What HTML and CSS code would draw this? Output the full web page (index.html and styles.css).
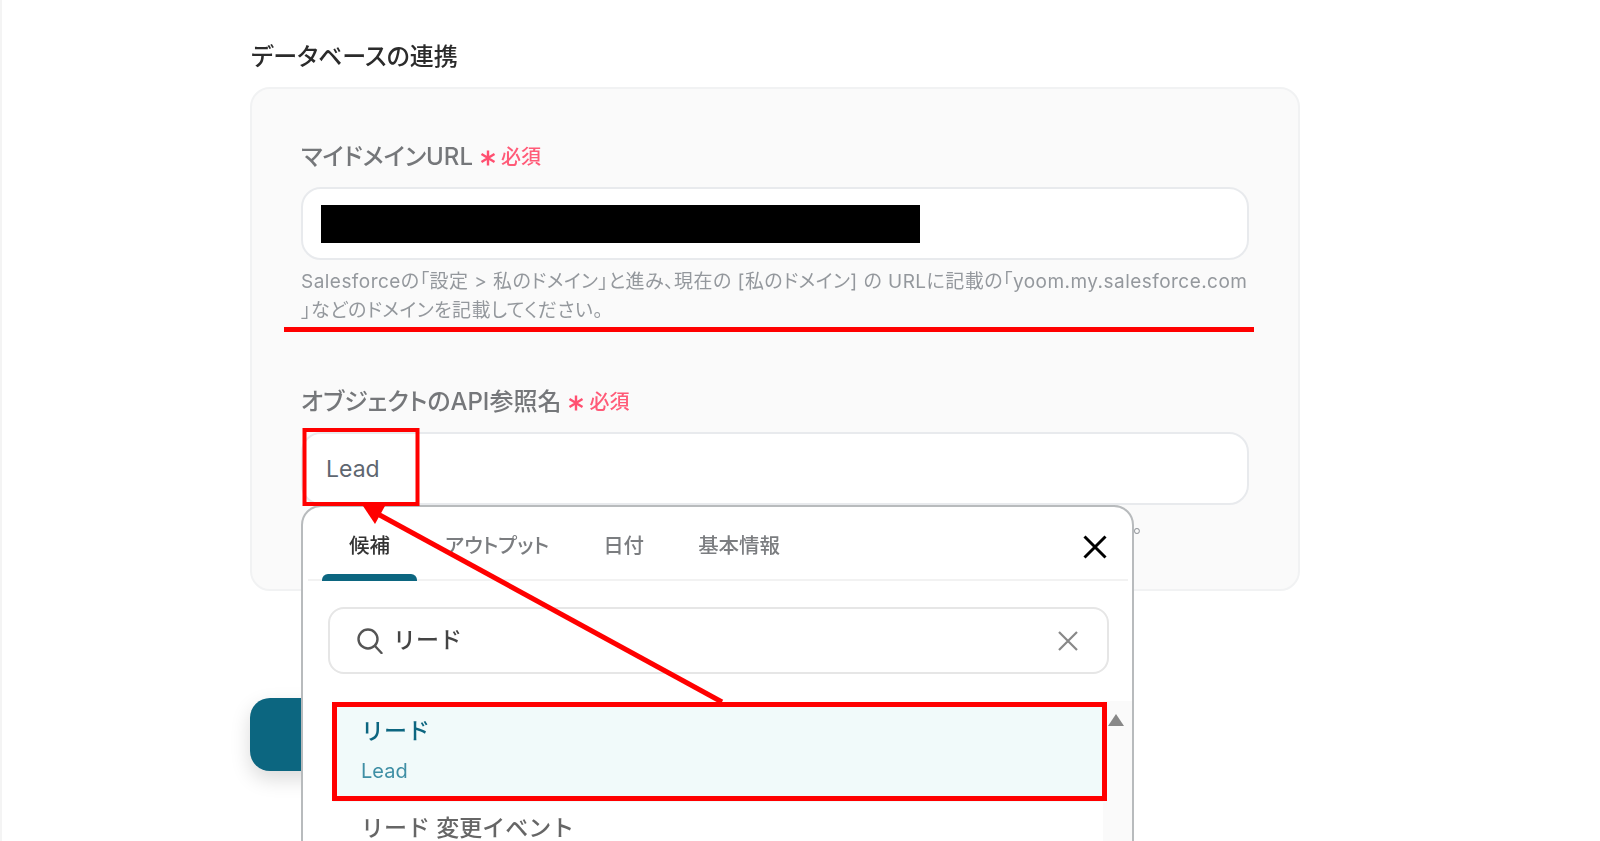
FILE: index.html
```html
<!DOCTYPE html>
<html lang="ja">
<head>
    <meta charset="UTF-8">
    <meta name="viewport" content="width=device-width, initial-scale=1.0">
    <title>データベースの連携</title>
    <link rel="stylesheet" href="styles.css">
</head>
<body>
    <main class="page">
        <h2 class="section-title">データベースの連携</h2>

        <section class="card">
            <div class="field">
                <label class="field-label">
                    <span class="label-text">マイドメインURL</span>
                    <svg class="required-mark" width="16" height="16" viewBox="0 0 16 16" fill="none" stroke="#ff4f70" stroke-width="2.4">
                        <path d="M8 0.5V15.5M1.5 4 14.5 12M14.5 4 1.5 12"/>
                    </svg>
                    <span class="required">必須</span>
                </label>
                <div class="text-input">
                    <span class="redaction"></span>
                </div>
                <p class="help">Salesforceの「設定 &gt; 私のドメイン」と進み、現在の [私のドメイン] の URLに記載の「yoom.my.salesforce.com<br>」などのドメインを記載してください。</p>
            </div>

            <div class="field field-second">
                <label class="field-label">
                    <span class="label-text">オブジェクトのAPI参照名</span>
                    <svg class="required-mark" width="16" height="16" viewBox="0 0 16 16" fill="none" stroke="#ff4f70" stroke-width="2.4">
                        <path d="M8 0.5V15.5M1.5 4 14.5 12M14.5 4 1.5 12"/>
                    </svg>
                    <span class="required">必須</span>
                </label>
                <div class="combo">
                    <div class="text-input">Lead</div>

                    <div class="popup">
                        <div class="tabs">
                            <span class="tab active">候補</span>
                            <span class="tab">アウトプット</span>
                            <span class="tab">日付</span>
                            <span class="tab">基本情報</span>
                            <button class="close" type="button" aria-label="閉じる">
                                <svg width="24" height="24" viewBox="0 0 24 24" fill="none" stroke="#000" stroke-width="3">
                                    <path d="M1.5 1.5 22.5 22.5M22.5 1.5 1.5 22.5"/>
                                </svg>
                            </button>
                        </div>

                        <div class="search">
                            <svg width="26" height="26" viewBox="0 0 26 26" fill="none" stroke="#555" stroke-width="2.4">
                                <circle cx="11" cy="11" r="9.5"/>
                                <path d="M18 18 24.5 25" stroke-linecap="round"/>
                            </svg>
                            <span class="search-text">リード</span>
                            <svg class="search-clear" width="20" height="20" viewBox="0 0 20 20" fill="none" stroke="#888" stroke-width="2.2">
                                <path d="M1 1 19 19M19 1 1 19"/>
                            </svg>
                        </div>

                        <div class="results">
                            <ul class="result-list">
                                <li class="result selected">
                                    <div class="result-title">リード</div>
                                    <div class="result-sub">Lead</div>
                                </li>
                                <li class="result">
                                    <div class="result-title">リード 変更イベント</div>
                                </li>
                            </ul>
                            <div class="scrollbar"><span class="scroll-up"></span></div>
                        </div>
                    </div>
                </div>
                <p class="help help-tail">。</p>
            </div>
        </section>

        <button class="primary" type="button"></button>
    </main>

    <!-- 赤い注釈 -->
    <svg class="annotations" width="1600" height="841" viewBox="0 0 1600 841" fill="none" stroke="#f00">
        <path d="M284 329.5H1254" stroke-width="5"/>
        <rect x="304.5" y="430" width="113" height="74" stroke-width="4"/>
        <rect x="334.5" y="704.5" width="770" height="94" stroke-width="5"/>
        <path d="M722 702 376 513" stroke-width="5"/>
        <polygon points="363,506 385,506 375,524" fill="#f00" stroke="none"/>
    </svg>
</body>
</html>
```

FILE: styles.css
```css
* {
    box-sizing: border-box;
}

body {
    font-family: Inter, 'Noto Sans CJK JP', sans-serif;
    font-feature-settings: "palt";
    margin: 0;
    height: 841px;
    overflow: hidden;
    position: relative;
    background-color: #fff;
    border-left: 2px solid #f4f4f4;
    color: #333;
}

.page {
    width: 1050px;
    margin-left: 248px;
    filter: blur(0.3px);
}

.section-title {
    margin: 0 0 0 1px;
    padding-top: 40px;
    font-size: 24px;
    font-weight: 500;
    line-height: 34px;
    color: #2b2b2b;
}

.card {
    margin-top: 13px;
    height: 504px;
    padding: 52px 49px 0;
    background-color: #fafafa;
    border: 2px solid #f1f2f3;
    border-radius: 20px;
}

.field-second {
    margin-top: 61px;
}

.field-label {
    display: flex;
    align-items: center;
    height: 30px;
    margin-bottom: 16px;
    font-size: 24px;
    font-weight: 500;
    color: #75777a;
}

.label-text {
    margin-top: -4px;
}

.required-mark {
    margin: 3px 5px 0 7px;
}

.required {
    margin-top: -1px;
    font-size: 20px;
    font-weight: 500;
    color: #ff5b78;
}

.text-input {
    display: flex;
    align-items: center;
    height: 73px;
    padding: 1px 0 0 23px;
    background-color: #fff;
    border: 2px solid #e8eaed;
    border-radius: 20px;
    font-size: 23px;
    color: #5e6670;
}

.redaction {
    display: block;
    width: 599px;
    height: 38px;
    margin-left: -5px;
    background-color: #000;
}

.help {
    margin: 7px 0 0;
    font-size: 19px;
    letter-spacing: 0.46px;
    line-height: 29px;
    color: #94989d;
    white-space: nowrap;
}

.help-tail {
    padding-left: 832px;
}

.combo {
    position: relative;
}

.popup {
    position: absolute;
    top: 100%;
    left: 0;
    z-index: 2;
    width: 833px;
    height: 400px;
    background-color: #fff;
    border: 2px solid #b8bbbd;
    border-radius: 20px;
}

.tabs {
    display: flex;
    height: 74px;
    margin: 0 4px 0 5px;
    padding-left: 15px;
    border-bottom: 2px solid #f2f2f2;
}

.tab {
    position: relative;
    padding: 0 27px;
    font-size: 20.5px;
    font-weight: 500;
    line-height: 78px;
    color: #7b7d80;
}

.tab.active {
    margin-left: -1px;
    margin-right: 1px;
    color: #333;
}

.tab.active::after {
    content: '';
    position: absolute;
    left: 0;
    right: 0;
    bottom: -2px;
    height: 7px;
    background-color: #0c6680;
    border-radius: 6px 6px 0 0;
}

.close {
    display: flex;
    align-items: center;
    margin-left: auto;
    margin-right: 21px;
    padding: 8px 0 0;
    background: none;
    border: none;
}

.search {
    display: flex;
    align-items: center;
    gap: 11px;
    width: 781px;
    height: 67px;
    margin: 26px 0 0 25px;
    padding: 0 29px 0 27px;
    border: 2px solid #e6e6e6;
    border-radius: 16px;
}

.search-text {
    margin: -6px 0 0 -1px;
    font-size: 23px;
    font-feature-settings: normal;
    font-weight: 500;
    color: #444;
}

.search-clear {
    margin-left: auto;
}

.results {
    display: flex;
    margin-top: 27px;
}

.result-list {
    flex: 1;
    margin: 0 0 0 30px;
    padding: 4px 0 0;
    list-style: none;
}

.result {
    padding: 11px 0 0 28px;
}

.result.selected {
    height: 97px;
    background-color: #f1fafa;
}

.result-title {
    font-size: 23px;
    font-feature-settings: normal;
    font-weight: 500;
    line-height: 30px;
    color: #666;
}

.selected .result-title {
    color: #0c6680;
}

.result-sub {
    margin-top: 11px;
    font-size: 20px;
    line-height: 28px;
    color: #3f8fa5;
}

.scrollbar {
    width: 29px;
    height: 200px;
    padding: 13px 0 0 5px;
    background-color: #fafafa;
}

.scroll-up {
    display: block;
    width: 0;
    height: 0;
    border-left: 8px solid transparent;
    border-right: 8px solid transparent;
    border-bottom: 12px solid #888;
}

.primary {
    display: block;
    width: 300px;
    height: 73px;
    margin-top: 107px;
    background-color: #0c6680;
    border: none;
    border-radius: 20px;
    box-shadow: 0 8px 20px rgba(0, 0, 0, 0.15);
}

.annotations {
    position: absolute;
    top: 0;
    left: -2px;
    z-index: 3;
    pointer-events: none;
}
```
